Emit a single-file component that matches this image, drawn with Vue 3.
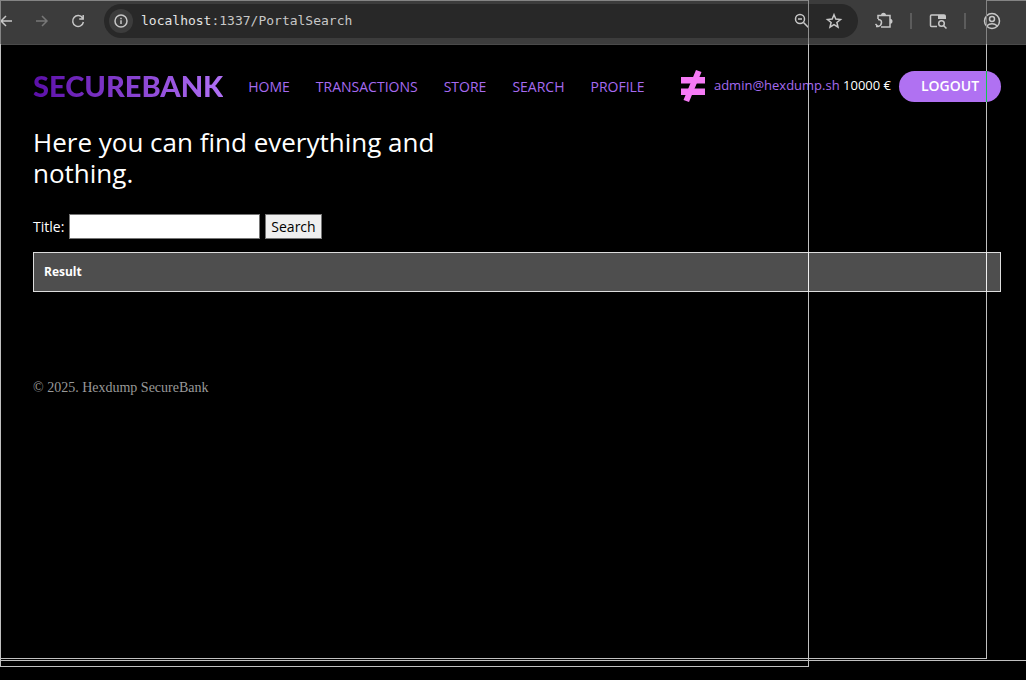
<script setup>
import { ref } from 'vue'

const title = ref('')
const links = ['Home', 'Transactions', 'Store', 'Search', 'Profile']
</script>

<template>
  <div class="window">
    <header class="toolbar">
      <button class="tool back" aria-label="Back">
        <svg width="16" height="16" viewBox="0 0 16 16"><path d="M14 8H3M8 3L3 8l5 5" /></svg>
      </button>
      <button class="tool forward" aria-label="Forward">
        <svg width="16" height="16" viewBox="0 0 16 16"><path d="M2 8h11M8 3l5 5-5 5" /></svg>
      </button>
      <button class="tool reload" aria-label="Reload">
        <svg width="16" height="16" viewBox="0 0 16 16"><path d="M12.6 5A5.4 5.4 0 1 0 13.4 9M13.2 2v4H9.2" /></svg>
      </button>
      <div class="address">
        <button class="tool info" aria-label="Site information">
          <svg width="16" height="16" viewBox="0 0 16 16"><circle cx="8" cy="8" r="6" /><path d="M8 7.2V11M8 4.8v1.4" /></svg>
        </button>
        <span class="url"><b>localhost</b>:1337/PortalSearch</span>
        <button class="tool" aria-label="Zoom">
          <svg width="16" height="16" viewBox="0 0 16 16"><circle cx="6" cy="6" r="4.5" /><path d="M9.5 9.500l5 5M4 6h4" /></svg>
        </button>
        <button class="tool star" aria-label="Bookmark">
          <svg width="16" height="16" viewBox="0 0 16 16"><path d="M8 1.8l1.8 4.3 4.7.4-3.6 3 1.1 4.6L8 11.6l-4 2.5 1.1-4.6-3.6-3 4.7-.4z" /></svg>
        </button>
      </div>
      <button class="tool puzzle" aria-label="Extensions">
        <svg width="20" height="20" viewBox="0 0 20 20"><path d="M4 8V4.500h12V16H7" /><path d="M1.500 13l2.500 2.500M4 8.500q3.500 0 3.500 3t-3.500 4H2" /><path class="solid" d="M7 4.500a2.500 2.700 0 0 1 5 0zM16 7.800a2.500 2.500 0 0 1 0 5z" /></svg>
      </button>
      <span class="divider"></span>
      <button class="tool" aria-label="Search tabs">
        <svg width="20" height="20" viewBox="0 0 20 20"><path d="M9 15.500H3.500q-1 0-1-1V5q0-1 1-1H10" /><path class="solid" d="M10 3.200h6q2 0 2 2V8h-8z" /><circle cx="13.500" cy="12.500" r="2.800" /><path d="M15.500 14.500l3 3" /></svg>
      </button>
      <span class="divider"></span>
      <button class="tool" aria-label="Account">
        <svg width="20" height="20" viewBox="0 0 20 20"><circle cx="10" cy="10" r="7.500" /><circle cx="10" cy="8" r="2.500" /><path d="M4.500 15q5.500-4.500 11 0" /></svg>
      </button>
    </header>

    <div class="page">
      <nav class="nav">
        <a class="brand" href="#">SECUREBANK</a>
        <div class="links">
          <a v-for="link in links" :key="link" class="link" href="#">{{ link }}</a>
        </div>
        <div class="account">
          <svg class="mark" width="24" height="32" viewBox="0 0 24 32"><path d="M0 7h24v6.500H0zM0 18.500h24V25H0z" /><path d="M15 0l5.500 2L8 32l-5.500-2z" /></svg>
          <p class="user"><a href="#">admin@hexdump.sh</a> 10000 €</p>
          <button class="logout">LOGOUT</button>
        </div>
      </nav>
      <main>
        <h1>Here you can find everything and nothing.</h1>
        <form class="search" @submit.prevent>
          <label for="title">Title:</label>
          <input id="title" v-model="title" type="text" />
          <button type="submit">Search</button>
        </form>
        <table>
          <thead><tr><th scope="col">Result</th></tr></thead>
        </table>
      </main>
      <footer>© 2025. Hexdump SecureBank</footer>
    </div>

    <i class="frame left"></i>
    <i class="frame top"></i>
    <i class="frame corner"></i>
    <i class="frame inner"></i>
    <i class="frame outer"></i>
    <i class="frame bottom-inner"></i>
    <i class="frame bottom-wide"></i>
    <i class="frame bottom-outer"></i>
  </div>
</template>

<style>
html, body { background: #000; }
</style>

<style scoped>
* { box-sizing: border-box; }
.window {
  position: relative;
  min-height: 100vh;
  overflow: hidden;
  background: #000;
  color: #fff;
  font: 14px/20px "Open Sans", sans-serif;
}
.toolbar {
  display: flex;
  align-items: center;
  height: 45px;
  padding: 0 24px 3px 0;
  background: #3c3c3c;
  border-bottom: 1px solid #4a4a4a;
}
.tool {
  display: flex;
  flex: none;
  padding: 0;
  border: 0;
  background: none;
  color: #c7c7c7;
}
.tool svg { fill: none; stroke: currentColor; stroke-width: 1.5; overflow: visible; }
.tool .solid { fill: currentColor; stroke: none; }
.back { margin-left: -2px; }
.forward { margin-left: 20px; color: #777; }
.reload { margin-left: 20px; }
.address {
  display: flex;
  flex: 1;
  align-items: center;
  height: 34px;
  margin-left: 18px;
  padding: 0 16px 0 5px;
  border-radius: 17px;
  background: #282828;
}
.info {
  width: 24px;
  height: 24px;
  align-items: center;
  justify-content: center;
  border-radius: 50%;
  background: #3c3c3c;
}
.url {
  flex: 1;
  margin-left: 8px;
  color: #c7c7c7;
  font: 13px/20px "DejaVu Sans Mono", monospace;
}
.url b { color: #e3e3e3; font-weight: 400; }
.star { margin-left: 16px; }
.puzzle { margin-left: 16px; }
.divider { width: 2px; height: 16px; margin: 0 16px; background: #5c5c5c; }

.page { padding: 23px 25px 24px 33px; }
.nav { display: flex; align-items: center; height: 36px; }
.nav a { text-decoration: none; }
.brand {
  background: linear-gradient(90deg, #5b0fa8, #b070f5);
  background-clip: text;
  color: transparent;
  font: 900 29px/36px Lato, sans-serif;
}
.links { display: flex; gap: 26px; margin-left: 25px; padding-top: 2px; }
.link { color: #a66bf0; text-transform: uppercase; }
.account { display: flex; align-items: center; margin-left: auto; }
.mark { margin-right: 9px; fill: #f57af5; }
.user { margin: 0 8px 2px 0; font-size: 13px; }
.user a { color: #a66bf0; }
.logout {
  width: 102px;
  height: 31px;
  padding: 0;
  border: 0;
  border-radius: 16px;
  background: #b071f2;
  color: #fff;
  font: 600 14px/20px "Open Sans", sans-serif;
}
h1 {
  max-width: 440px;
  margin: 23px 0 25px;
  font-size: 26px;
  font-weight: 400;
  line-height: 31px;
}
.search { display: flex; align-items: center; gap: 5px; }
.search input {
  width: 191px;
  height: 25px;
  border: 1px solid #767676;
  background: #fff;
}
.search button {
  height: 25px;
  padding: 0 5px;
  border: 1px solid #767676;
  background: #efefef;
  color: #000;
  font: 14px/20px "Open Sans", sans-serif;
}
table { width: 100%; margin-top: 13px; border-collapse: collapse; }
th {
  height: 39px;
  padding: 0 10px;
  border: 1px solid #ddd;
  background: #4e4e4e;
  font-size: 12px;
  text-align: left;
}
footer {
  margin-top: 86px;
  color: #999;
  font: 14px/20px "Liberation Serif", serif;
}

.frame {
  position: absolute;
  background: #c0c0c0;
  pointer-events: none;
}
.left { left: 0; top: 0; width: 1px; height: 666px; background: linear-gradient(#848484 44px, #c0c0c0 44px); }
.top { left: 0; top: 0; width: 809px; height: 1px; background: #848484; }
.corner { left: 986px; top: 0; right: 0; height: 1px; background: #848484; }
.inner {
  left: 808px;
  top: 0;
  width: 1px;
  height: 667px;
  background: linear-gradient(#909090 44px, #c0c0c0 44px 252px, #f0f0f0 252px 292px, #c0c0c0 292px);
}
.outer {
  left: 986px;
  top: 0;
  width: 1px;
  height: 659px;
  background: linear-gradient(#848484 44px, #c0c0c0 44px 71px, #10c850 71px 102px, #c0c0c0 102px 252px, #f0f0f0 252px 292px, #c0c0c0 292px);
}
.bottom-inner { left: 0; top: 658px; width: 987px; height: 1px; }
.bottom-wide { left: 0; top: 660px; right: 0; height: 1px; }
.bottom-outer { left: 0; top: 666px; width: 809px; height: 1px; }
</style>
